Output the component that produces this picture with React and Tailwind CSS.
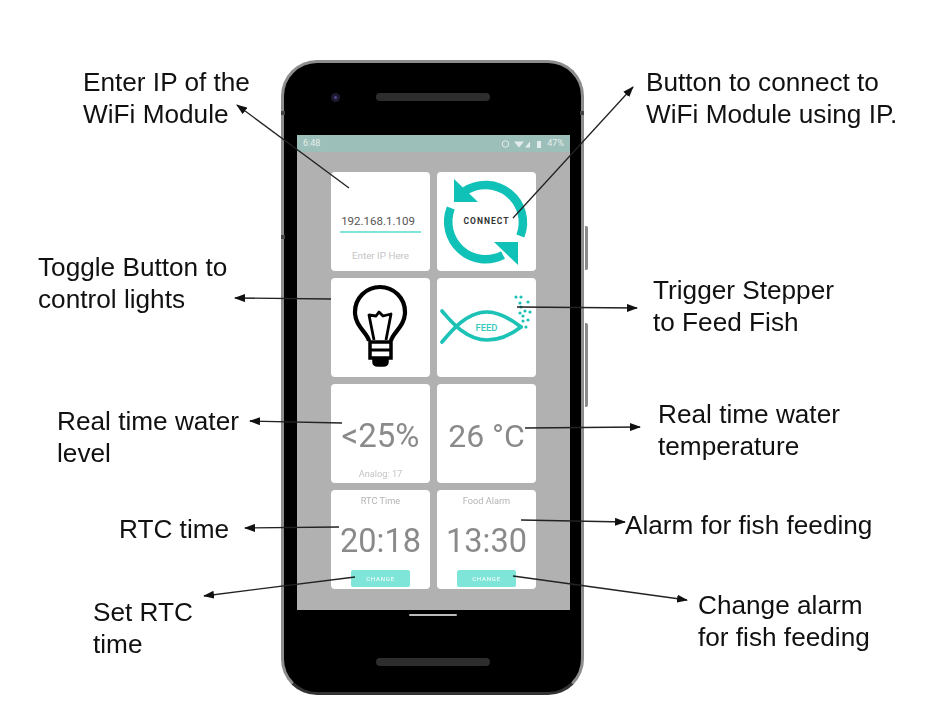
const ROBOTO = "font-['Roboto',sans-serif]"

const notes = [
  { lines: ['Enter IP of the', 'WiFi Module'], pos: 'left-[83px] top-[66px]' },
  { lines: ['Button to connect to', 'WiFi Module using IP.'], pos: 'left-[646px] top-[66px]' },
  { lines: ['Toggle Button to', 'control lights'], pos: 'left-[38px] top-[251px]' },
  { lines: ['Trigger Stepper', 'to Feed Fish'], pos: 'left-[653px] top-[274px]' },
  { lines: ['Real time water', 'level'], pos: 'left-[57px] top-[405px]' },
  { lines: ['Real time water', 'temperature'], pos: 'left-[658px] top-[398px]' },
  { lines: ['RTC time'], pos: 'left-[119px] top-[513px]' },
  { lines: ['Alarm for fish feeding'], pos: 'left-[625px] top-[509px]' },
  { lines: ['Set RTC', 'time'], pos: 'left-[93px] top-[596px]' },
  { lines: ['Change alarm', 'for fish feeding'], pos: 'left-[698px] top-[589px]' },
]

const arrows = [
  [349, 188, 237, 105],
  [513, 218, 633, 87],
  [331, 299, 235, 298],
  [517, 307, 637, 308],
  [342, 423, 250, 421],
  [525, 428, 640, 427],
  [339, 527, 245, 528],
  [521, 520, 625, 522],
  [355, 577, 204, 596],
  [513, 576, 687, 600],
]

function Arrows() {
  return (
    <svg className="absolute inset-0 w-[928px] h-[718px] blur-[0.4px]" viewBox="0 0 928 718">
      <defs>
        <marker id="head" markerWidth="11" markerHeight="8" refX="10" refY="4" orient="auto" markerUnits="userSpaceOnUse">
          <path d="M0 0L11 4L0 8Z" fill="#111" />
        </marker>
      </defs>
      {arrows.map(([x1, y1, x2, y2]) => (
        <line key={`${x1}-${y1}`} x1={x1} y1={y1} x2={x2} y2={y2} stroke="#222" strokeWidth="1.3" markerEnd="url(#head)" />
      ))}
    </svg>
  )
}

function Card({ children, className = '' }) {
  return <div className={`w-[99px] h-[99px] bg-white rounded-[4px] flex flex-col items-center ${className}`}>{children}</div>
}

function ConnectIcon() {
  return (
    <svg className="w-[99px] h-[99px]" viewBox="0 0 99 99" fill="none">
      <path d="M28 19A37.5 37.5 0 0 1 83.4 64" stroke="#0fc1b6" strokeWidth="8.5" />
      <path d="M13.8 36A37.5 37.5 0 0 0 66 83" stroke="#0fc1b6" strokeWidth="8.5" />
      <path d="M17 7V30H41Z" fill="#0fc1b6" />
      <path d="M57 70H81V93Z" fill="#0fc1b6" />
    </svg>
  )
}

function BulbIcon() {
  return (
    <svg className="w-[99px] h-[99px]" viewBox="0 0 99 99" fill="none" stroke="#000">
      <path d="M38 63C37 55 24 49 24 34A25 25 0 0 1 74 34C74 49 61 55 60 63" strokeWidth="4.2" />
      <path d="M43 62L38 37L45 38L48 34L52 38L60 36L55 62" strokeWidth="2.8" strokeLinejoin="round" />
      <path d="M39 64H60V80H39Z" strokeWidth="3.5" />
      <path d="M39 72H60" strokeWidth="3" />
      <path d="M42 81H57V84Q57 88 52 88H47Q42 88 42 84Z" fill="#000" strokeWidth="1.5" />
    </svg>
  )
}

const bubbles = [[79, 19], [84, 19], [83, 25], [91, 24], [84, 29], [88, 33], [93, 34], [83, 35], [86, 38], [91, 42], [86, 43], [89, 49]]

function FishIcon() {
  return (
    <svg className="w-[99px] h-[99px]" viewBox="0 0 99 99" fill="none">
      <path d="M5 33C15 45 30 62 50 62C63 62 75 56 84 49" stroke="#1cc2b5" strokeWidth="3.6" strokeLinecap="round" />
      <path d="M5 64C15 52 30 34 50 34C63 34 75 42 84 49" stroke="#1cc2b5" strokeWidth="3.6" strokeLinecap="round" />
      {bubbles.map(([cx, cy]) => <circle key={`${cx}-${cy}`} cx={cx} cy={cy} r="1.6" fill="#1cc2b5" />)}
    </svg>
  )
}

function StatusIcons() {
  return (
    <svg className="w-[44px] h-[10px]" viewBox="0 0 44 10" fill="none">
      <circle cx="4.5" cy="5" r="3.2" stroke="#e3eeec" strokeWidth="1" />
      <path d="M13 2.5H23L18 8.5Z" fill="#e3eeec" />
      <path d="M24 8.5L29 2.5V8.5Z" fill="#e3eeec" />
      <path d="M36 2H40V9H36Z" fill="#e3eeec" />
    </svg>
  )
}

function ChangeButton() {
  return (
    <div className="w-[59px] h-[17px] mt-[10px] bg-[#80e5d9] rounded-[2px] flex items-center justify-center text-[6px] tracking-[0.8px] text-white">
      CHANGE
    </div>
  )
}

function Phone() {
  return (
    <div className="relative w-[303px] h-[635px] ml-[281px] bg-black rounded-[36px] border-[3px] border-[#8d8d8d] border-b-[#333] blur-[0.5px] flex flex-col">
      <div className="absolute left-[301px] top-[163px] w-[3px] h-[44px] bg-[#8a8a8a] rounded-r-[2px]" />
      <div className="absolute left-[301px] top-[260px] w-[3px] h-[84px] bg-[#8a8a8a] rounded-r-[2px]" />
      <div className="absolute -left-[3px] top-[48px] w-[4px] h-[4px] bg-[#444]" />
      <div className="absolute -left-[3px] top-[172px] w-[4px] h-[4px] bg-[#444]" />
      <div className="absolute left-[296px] top-[48px] w-[4px] h-[4px] bg-[#444]" />

      <div className="h-[72px] flex items-center shrink-0 pl-[47px] pb-[4px]">
        <div className="w-[9px] h-[9px] rounded-full bg-[#1d1a30] flex items-center justify-center">
          <div className="w-[3px] h-[3px] rounded-full bg-[#4f4a8a]" />
        </div>
        <div className="w-[114px] h-[8px] ml-[36px] rounded-full bg-[#2d2d2d]" />
      </div>

      <div className={`w-[273px] h-[475px] ml-[13px] bg-[#b1b1b1] shrink-0 ${ROBOTO}`}>
        <div className="h-[17px] bg-[#9cbfb9] flex items-center justify-between pl-[6px] pr-[6px] text-[9px] text-[#e3eeec]">
          <span>6:48</span>
          <div className="flex items-center gap-[2px]">
            <StatusIcons />
            <span>47%</span>
          </div>
        </div>
        <div className="grid grid-cols-[99px_99px] gap-x-[7px] gap-y-[7px] pl-[34px] pt-[20px]">
          <Card className="pt-[43px]">
            <span className="text-[11.5px] leading-[13px] text-[#555] -ml-[5px]">192.168.1.109</span>
            <div className="w-[81px] h-[2px] mt-[3px] bg-[#80e5d9]" />
            <span className="mt-[17px] text-[9.8px] leading-[11px] text-[#c4c4c4]">Enter IP Here</span>
          </Card>
          <Card className="relative">
            <ConnectIcon />
            <span className="absolute top-[44px] text-[8.5px] leading-[11px] font-bold tracking-[1px] text-[#333]">CONNECT</span>
          </Card>
          <Card><BulbIcon /></Card>
          <Card className="relative">
            <FishIcon />
            <span className="absolute top-[43px] text-[9.5px] leading-[13px] font-medium text-[#35c9bd]">FEED</span>
          </Card>
          <Card className="pt-[33px]">
            <span className="text-[33px] leading-[38px] text-[#8a8a8a]">&lt;25%</span>
            <span className="mt-[14px] text-[9.2px] leading-[10px] text-[#c4c4c4]">Analog: 17</span>
          </Card>
          <Card className="pt-[33px]">
            <span className="text-[32px] leading-[38px] text-[#8a8a8a]">26 °C</span>
          </Card>
          <Card className="pt-[5px]">
            <span className="text-[9.2px] leading-[11px] text-[#b4b4b4]">RTC Time</span>
            <span className="mt-[16px] text-[32.5px] leading-[38px] text-[#8a8a8a]">20:18</span>
            <ChangeButton />
          </Card>
          <Card className="pt-[5px]">
            <span className="text-[9.2px] leading-[11px] text-[#b4b4b4]">Food Alarm</span>
            <span className="mt-[16px] text-[32.5px] leading-[38px] text-[#8a8a8a]">13:30</span>
            <ChangeButton />
          </Card>
        </div>
      </div>

      <div className="flex-1 flex flex-col items-center">
        <div className="w-[48px] h-[2px] mt-[4px] bg-[#bbb] rounded-full" />
        <div className="w-[114px] h-[8px] mt-[42px] rounded-full bg-[#2d2d2d]" />
      </div>
    </div>
  )
}

export default function App() {
  return (
    <div className="relative w-[928px] h-[718px] pt-[60px] bg-white overflow-hidden font-['Liberation_Sans',Arial,sans-serif]">
      <Phone />
      <Arrows />
      {notes.map(n => (
        <div key={n.lines[0] + n.pos} className={`absolute ${n.pos} text-[26.2px] leading-[32px] text-[#111] whitespace-nowrap`}>
          {n.lines.map(l => <div key={l}>{l}</div>)}
        </div>
      ))}
    </div>
  )
}
